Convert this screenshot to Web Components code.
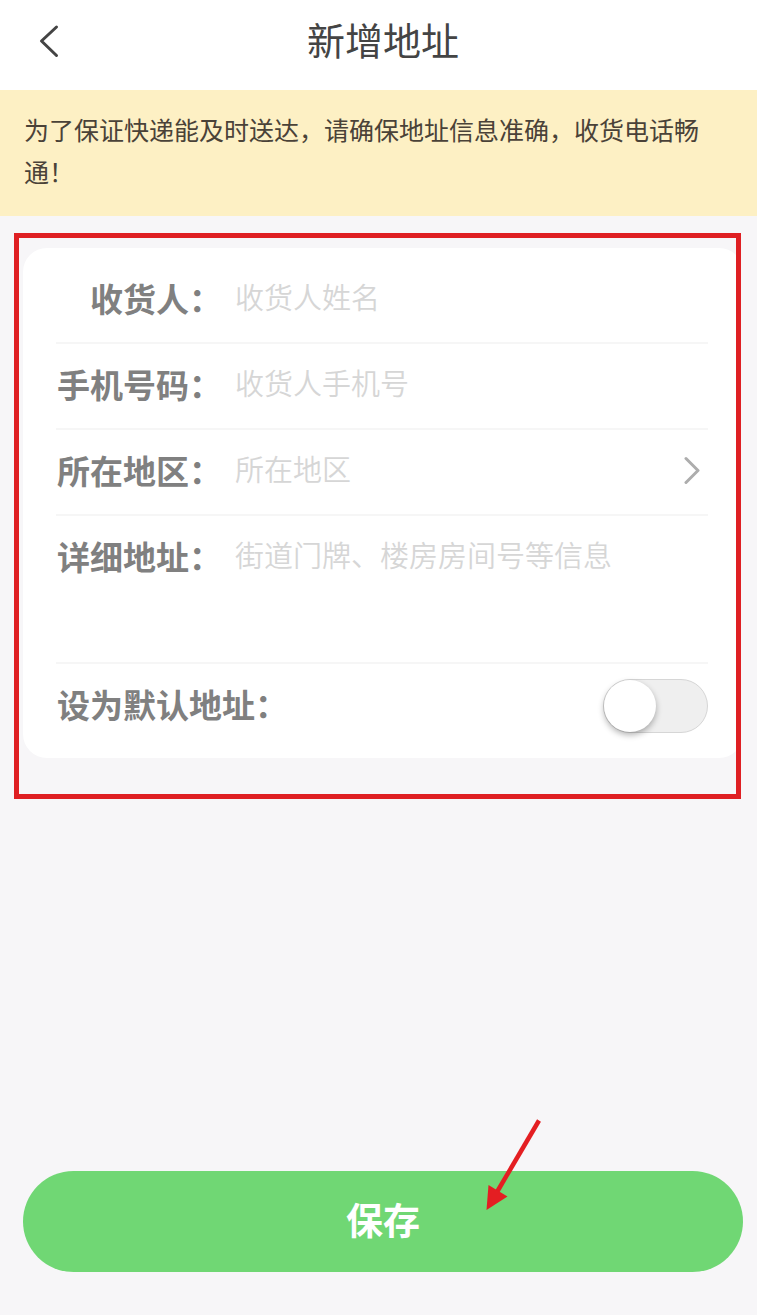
<!DOCTYPE html>
<html lang="zh-CN">
<head>
<meta charset="UTF-8">
<meta name="viewport" content="width=device-width, initial-scale=1.0">
<title>新增地址</title>
<style>
    body {
        margin: 0;
        font-family: "Noto Sans CJK SC", sans-serif;
        background-color: #f7f6f8;
    }
</style>
</head>
<body>
<address-page></address-page>

<script>
class PageHeader extends HTMLElement {

    constructor() {
        super();
        this.shadowDOM = this.attachShadow({mode: "open"});
    }

    connectedCallback() {
        this.render();
    }

    render() {
        this.shadowDOM.innerHTML = `
        <style>
            :host {
                display: block;
                background-color: white;
                color: #444;
            }

            header {
                display: grid;
                grid-template-columns: 1fr auto 1fr;
                align-items: center;
                height: 82px;
                padding: 0 14px 8px 23px;
            }

            button {
                display: flex;
                justify-self: start;
                padding: 0;
                border: 0;
                background: none;
                color: inherit;
                cursor: pointer;
            }

            h1 {
                margin: 0;
                padding-bottom: 4px;
                font-size: 38px;
                font-weight: 400;
                line-height: 52px;
            }
        </style>
        <header>
            <button type="button" aria-label="返回">
                <svg width="48" height="48" viewBox="0 0 48 48" fill="none" stroke="currentColor" stroke-width="3" stroke-linecap="round" stroke-linejoin="round">
                    <path d="M33.5 10 18.5 24l15 14.5"/>
                </svg>
            </button>
            <h1><slot></slot></h1>
        </header>
        `;
    }
}

class NoticeBar extends HTMLElement {

    constructor() {
        super();
        this.shadowDOM = this.attachShadow({mode: "open"});
    }

    connectedCallback() {
        this.render();
    }

    render() {
        this.shadowDOM.innerHTML = `
        <style>
            :host {
                display: block;
                padding: 18px 24px 24px;
                background-color: #fdf0c4;
                color: #4a4238;
                font-size: 25px;
                line-height: 42px;
            }

            p {
                margin: 0;
            }
        </style>
        <p><slot></slot></p>
        `;
    }
}

// red outline around the part that has to be filled in
class MarkFrame extends HTMLElement {

    constructor() {
        super();
        this.shadowDOM = this.attachShadow({mode: "open"});
    }

    connectedCallback() {
        this.render();
    }

    render() {
        this.shadowDOM.innerHTML = `
        <style>
            :host {
                display: block;
                margin: 17px 16px 0 14px;
                padding: 10px 0 36px 4px;
                border: 5px solid #df1f23;
                overflow: hidden;
            }
        </style>
        <slot></slot>
        `;
    }
}

class FormCard extends HTMLElement {

    constructor() {
        super();
        this.shadowDOM = this.attachShadow({mode: "open"});
    }

    connectedCallback() {
        this.render();
    }

    render() {
        this.shadowDOM.innerHTML = `
        <style>
            :host {
                display: block;
                margin-right: -7px;
                padding: 10px 35px 6px 33px;
                border-radius: 24px;
                background-color: white;
            }
        </style>
        <slot></slot>
        `;
    }
}

class FormRow extends HTMLElement {

    constructor() {
        super();
        this.shadowDOM = this.attachShadow({mode: "open"});
    }

    connectedCallback() {
        this.render();
    }

    get hint() {
        return this.getAttribute("hint") || "";
    }

    control() {
        switch (this.getAttribute("type")) {
            case "select":
                return `
                <select id="field">
                    <option value="">${this.hint}</option>
                </select>
                <svg width="24" height="32" viewBox="0 0 24 32" fill="none" stroke="#adadad" stroke-width="3" stroke-linecap="round" stroke-linejoin="round">
                    <path d="M2 4.500 14 16.500 2 28.500"/>
                </svg>`;
            case "textarea":
                return `<textarea id="field" placeholder="${this.hint}"></textarea>`;
            case "switch":
                return `<input id="field" type="checkbox" role="switch">`;
            default:
                return `<input id="field" type="${this.getAttribute("type") || "text"}" placeholder="${this.hint}">`;
        }
    }

    render() {
        this.shadowDOM.innerHTML = `
        <style>
            :host {
                display: block;
                border-bottom: 2px solid #f6f6f6;
            }

            :host(:last-child) {
                border-bottom: 0;
            }

            .row {
                display: flex;
                align-items: flex-start;
                gap: 13px;
                padding: 15px 0 19px 1px;
            }

            label {
                flex: none;
                min-width: 165px;
                color: #808080;
                font-size: 33px;
                font-weight: 700;
                line-height: 50px;
                text-align: right;
            }

            input, select, textarea {
                flex: 1;
                min-width: 0;
                height: 46px;
                margin: 0;
                padding: 0;
                border: 0;
                outline: 0;
                appearance: none;
                background: none;
                color: #444;
                font-family: inherit;
                font-size: 29px;
                font-weight: 350;
                line-height: 46px;
            }

            input::placeholder, textarea::placeholder {
                color: #d6d6d6;
                opacity: 1;
            }

            select {
                color: #d6d6d6;
            }

            textarea {
                height: 112px;
                resize: none;
            }

            svg {
                flex: none;
                align-self: center;
            }

            input[type="checkbox"] {
                flex: none;
                box-sizing: border-box;
                width: 105px;
                height: 54px;
                margin-left: auto;
                border: 1px solid #d6d6d6;
                border-radius: 27px;
                background-color: #efefef;
                cursor: pointer;
            }

            input[type="checkbox"]::before {
                content: "";
                display: block;
                width: 52px;
                height: 52px;
                border-radius: 50%;
                background-color: white;
                box-shadow: 0 3px 6px rgba(0, 0, 0, 0.3);
            }

            input[type="checkbox"]:checked {
                background-color: #70d774;
            }

            input[type="checkbox"]:checked::before {
                margin-left: auto;
            }
        </style>
        <div class="row">
            <label for="field">${this.getAttribute("label")}</label>
            ${this.control()}
        </div>
        `;
    }
}

class SaveButton extends HTMLElement {

    constructor() {
        super();
        this.shadowDOM = this.attachShadow({mode: "open"});
    }

    connectedCallback() {
        this.render();
    }

    render() {
        this.shadowDOM.innerHTML = `
        <style>
            :host {
                display: block;
                position: relative;
            }

            button {
                display: block;
                width: 100%;
                padding: 20px 0 25px;
                border: 0;
                border-radius: 52px;
                background-color: #70d774;
                color: white;
                font-family: inherit;
                font-size: 37px;
                font-weight: 700;
                line-height: 56px;
                cursor: pointer;
            }

            /* arrow pointing at the button */
            svg {
                position: absolute;
                top: -53px;
                left: calc(50% + 101px);
                pointer-events: none;
            }
        </style>
        <button type="button"><slot></slot></button>
        <svg width="60" height="94" viewBox="0 0 60 94" aria-hidden="true">
            <path d="M55 2.500 13 74" stroke="#e41e22" stroke-width="4.500"/>
            <path d="M2.500 92 4.500 67 23.500 78.500z" fill="#e41e22"/>
        </svg>
        `;
    }
}

class AddressPage extends HTMLElement {

    constructor() {
        super();
        this.shadowDOM = this.attachShadow({mode: "open"});
    }

    connectedCallback() {
        this.render();
    }

    render() {
        this.shadowDOM.innerHTML = `
        <style>
            :host {
                display: flex;
                flex-direction: column;
                min-height: 100vh;
            }

            footer {
                margin-top: auto;
                padding: 80px 14px 43px 23px;
            }
        </style>
        <page-header>新增地址</page-header>
        <notice-bar>为了保证快递能及时送达，请确保地址信息准确，收货电话畅通！</notice-bar>
        <mark-frame>
            <form-card>
                <form-row label="收货人：" hint="收货人姓名"></form-row>
                <form-row label="手机号码：" type="tel" hint="收货人手机号"></form-row>
                <form-row label="所在地区：" type="select" hint="所在地区"></form-row>
                <form-row label="详细地址：" type="textarea" hint="街道门牌、楼房房间号等信息"></form-row>
                <form-row label="设为默认地址：" type="switch"></form-row>
            </form-card>
        </mark-frame>
        <footer>
            <save-button>保存</save-button>
        </footer>
        `;
    }
}

customElements.define("page-header", PageHeader);
customElements.define("notice-bar", NoticeBar);
customElements.define("mark-frame", MarkFrame);
customElements.define("form-card", FormCard);
customElements.define("form-row", FormRow);
customElements.define("save-button", SaveButton);
customElements.define("address-page", AddressPage);
</script>
</body>
</html>
